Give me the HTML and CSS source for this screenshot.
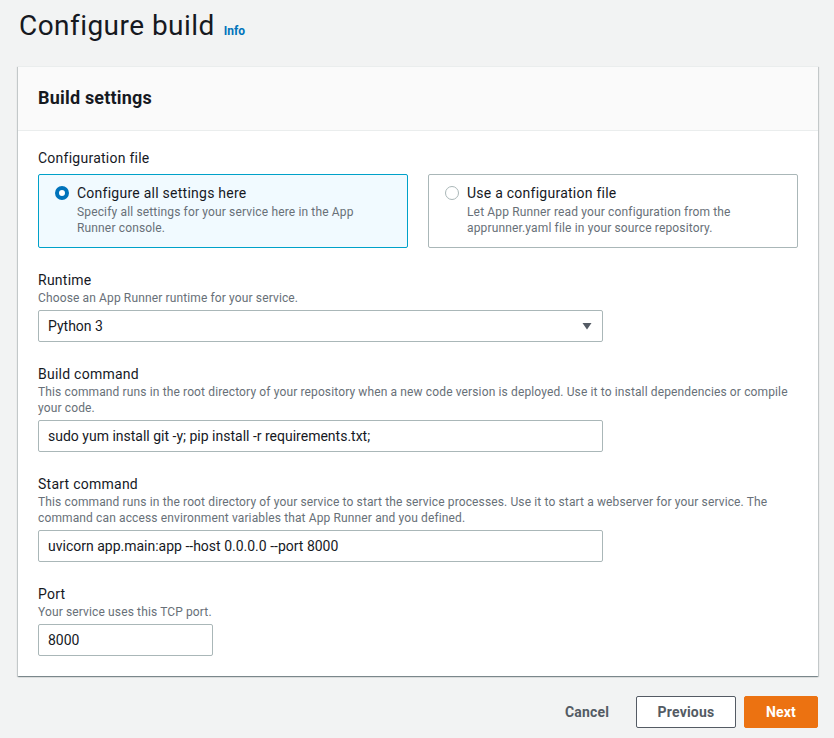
FILE: index.html
```html
<!DOCTYPE html>
<html lang="en">
<head>
<meta charset="utf-8">
<title>Configure build</title>
<link rel="stylesheet" href="styles.css">
</head>
<body>
<div class="page">
  <div class="page-header">
    <h1 class="title">Configure build</h1>
    <a class="info" href="#">Info</a>
  </div>

  <section class="card">
    <div class="card-header">
      <h2>Build settings</h2>
    </div>
    <div class="card-body">
      <div class="group-label">Configuration file</div>
      <div class="tiles">
        <label class="tile selected">
          <span class="radio checked"></span>
          <span class="tile-text">
            <span class="tile-title">Configure all settings here</span>
            <span class="tile-desc">Specify all settings for your service here in the App Runner console.</span>
          </span>
        </label>
        <label class="tile">
          <span class="radio"></span>
          <span class="tile-text">
            <span class="tile-title">Use a configuration file</span>
            <span class="tile-desc">Let App Runner read your configuration from the apprunner.yaml file in your source repository.</span>
          </span>
        </label>
      </div>

      <div class="field">
        <div class="label">Runtime</div>
        <div class="desc">Choose an App Runner runtime for your service.</div>
        <div class="control select">
          <span>Python 3</span>
          <svg class="caret" width="10" height="8" viewBox="0 0 10 8"><path d="M0.5 1h9L5 7.5z" fill="#545b64"/></svg>
        </div>
      </div>

      <div class="field">
        <div class="label">Build command</div>
        <div class="desc">This command runs in the root directory of your repository when a new code version is deployed. Use it to install dependencies or compile your code.</div>
        <div class="control">sudo yum install git -y; pip install -r requirements.txt;</div>
      </div>

      <div class="field">
        <div class="label">Start command</div>
        <div class="desc">This command runs in the root directory of your service to start the service processes. Use it to start a webserver for your service. The command can access environment variables that App Runner and you defined.</div>
        <div class="control">uvicorn app.main:app --host 0.0.0.0 --port 8000</div>
      </div>

      <div class="field">
        <div class="label">Port</div>
        <div class="desc">Your service uses this TCP port.</div>
        <div class="control short">8000</div>
      </div>
    </div>
  </section>

  <div class="actions">
    <button class="btn link">Cancel</button>
    <button class="btn normal">Previous</button>
    <button class="btn primary">Next</button>
  </div>
</div>
</body>
</html>
```

FILE: styles.css
```css
* { box-sizing: border-box; }

body {
  margin: 0;
  background: #f2f3f3;
  font-family: Roboto, "Liberation Sans", sans-serif;
  color: #16191f;
}

.page {
  padding: 8px 16px 0 18px;
}

.page-header {
  display: flex;
  align-items: baseline;
  gap: 9px;
  padding-left: 1px;
  height: 58px;
}

.title {
  margin: 0;
  font-size: 28px;
  font-weight: 400;
  line-height: 36px;
  letter-spacing: 0.45px;
  color: #16191f;
}

.info {
  font-size: 12px;
  font-weight: 700;
  color: #0073bb;
  text-decoration: none;
}

.card {
  width: 800px;
  background: #fff;
  border-top: 1px solid #eaeded;
  box-shadow: 0 1px 1px 0 rgba(0, 28, 36, 0.3), 1px 1px 1px 0 rgba(0, 28, 36, 0.15), -1px 1px 1px 0 rgba(0, 28, 36, 0.15);
}

.card-header {
  background: #fafafa;
  border-bottom: 1px solid #eaeded;
  height: 64px;
  padding: 0 20px 2px;
  display: flex;
  align-items: center;
}

.card-header h2 {
  margin: 0;
  font-size: 18px;
  font-weight: 700;
  line-height: 22px;
  letter-spacing: 0.2px;
}

.card-body {
  padding: 16px 20px 20px;
}

.group-label {
  font-size: 14px;
  line-height: 22px;
  letter-spacing: 0.25px;
  margin-bottom: 5px;
}

.tiles {
  display: grid;
  grid-template-columns: 370px 370px;
  gap: 20px;
}

.tile {
  display: flex;
  gap: 8px;
  border: 1px solid #aab7b8;
  border-radius: 2px;
  padding: 7px 40px 11px 16px;
  height: 74px;
  background: #fff;
}

.tile.selected {
  background: #f1faff;
  border-color: #00a1c9;
}

.radio {
  flex: none;
  width: 14px;
  height: 14px;
  margin-top: 4px;
  border-radius: 50%;
  border: 1px solid #aab7b8;
  background: #fff;
}

.radio.checked {
  border: 4px solid #0073bb;
}

.tile-text {
  display: flex;
  flex-direction: column;
}

.tile-title {
  font-size: 14px;
  line-height: 22px;
  letter-spacing: 0.25px;
  color: #16191f;
}

.tile-desc {
  font-size: 12px;
  line-height: 16px;
  letter-spacing: 0.15px;
  color: #687078;
}

.field {
  margin-top: 22px;
}

.label {
  font-size: 14px;
  line-height: 20px;
  letter-spacing: 0.25px;
  color: #16191f;
}

.desc {
  font-size: 12px;
  line-height: 16px;
  letter-spacing: 0.13px;
  color: #687078;
}

.control {
  margin-top: 4px;
  width: 565px;
  height: 32px;
  border: 1px solid #aab7b8;
  border-radius: 2px;
  padding: 0 9px;
  display: flex;
  align-items: center;
  font-size: 14px;
  color: #16191f;
  background: #fff;
}

.control.select {
  justify-content: space-between;
  padding-right: 10px;
}

.control.short {
  width: 175px;
}

.actions {
  display: flex;
  justify-content: flex-end;
  gap: 8px;
  margin-top: 20px;
}

.btn {
  font-family: inherit;
  font-size: 14px;
  font-weight: 700;
  letter-spacing: 0.2px;
  height: 32px;
  padding: 0 20px;
  border-radius: 2px;
  border: 1px solid transparent;
  background: transparent;
  color: #545b64;
  cursor: pointer;
}

.btn.normal {
  width: 100px;
  background: #fff;
  border-color: #545b64;
}

.btn.primary {
  width: 74px;
  background: #ec7211;
  border-color: #ec7211;
  color: #fff;
}

.btn.link {
  width: 84px;
}
```
